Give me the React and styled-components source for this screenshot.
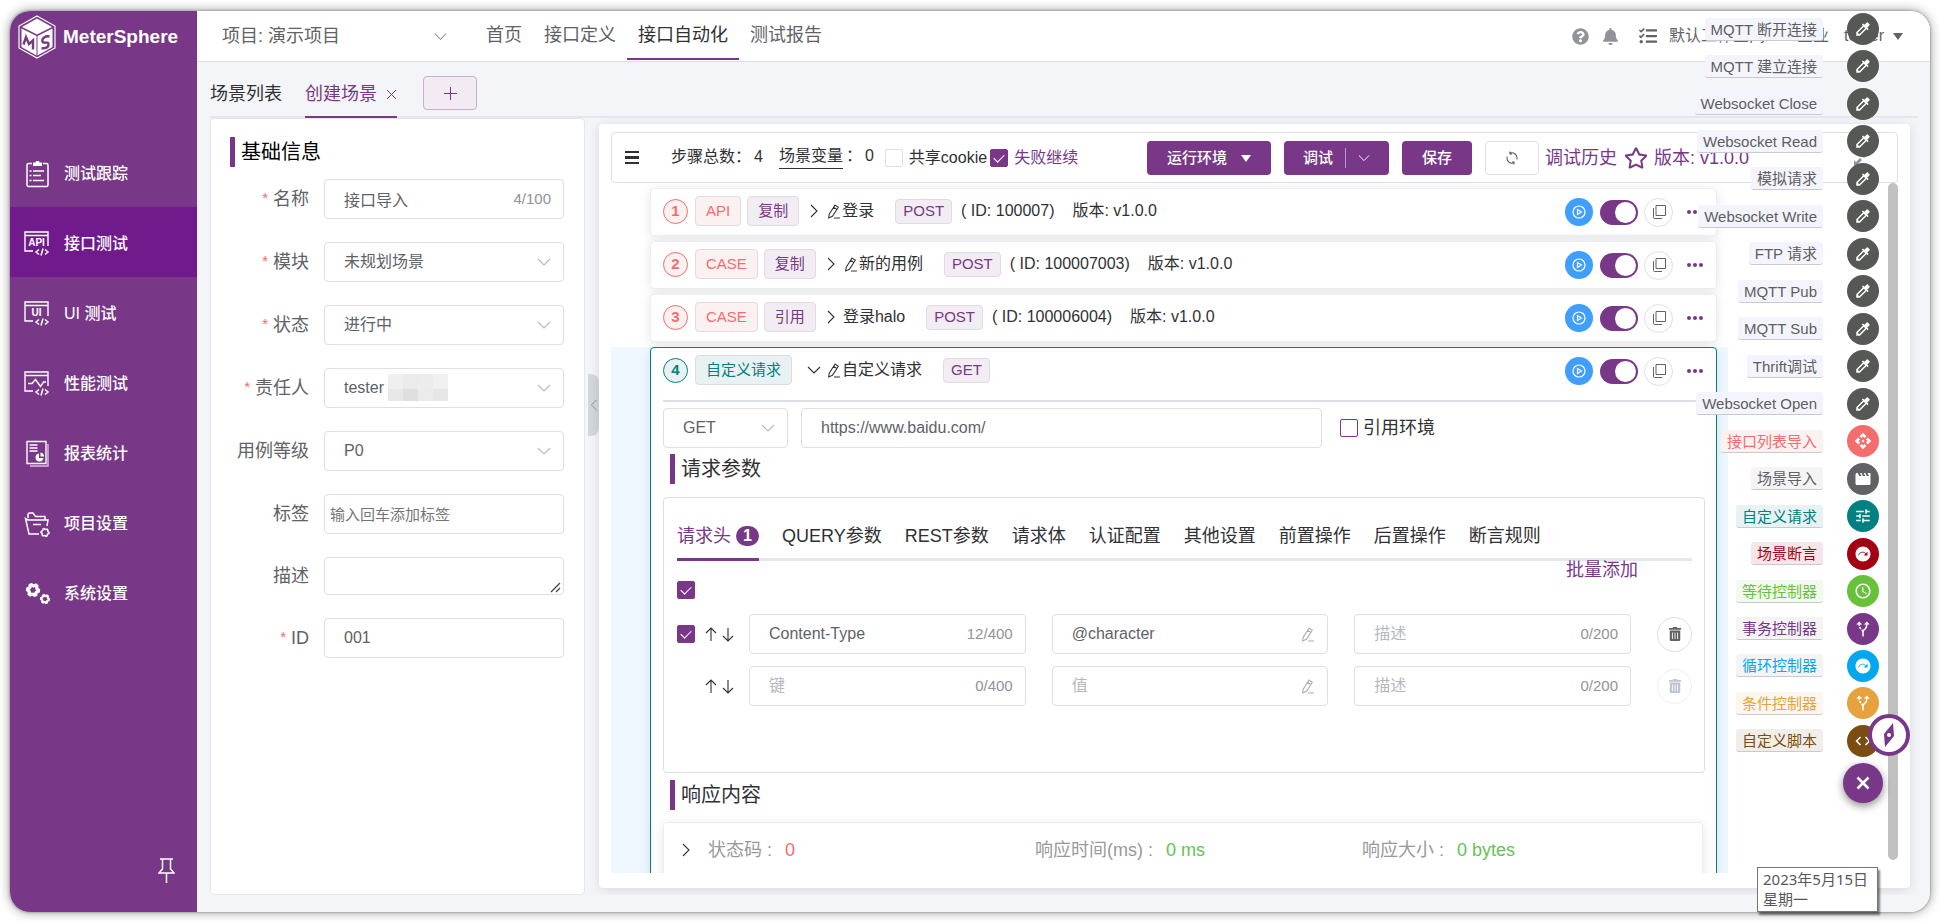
import React from 'react';
import styled, { createGlobalStyle, css } from 'styled-components';
import { FaQuestionCircle, FaBell, FaTasks, FaRegStar, FaTrashAlt } from 'react-icons/fa';
import {
  MdColorize, MdApi, MdMovie, MdTune, MdNextPlan, MdAccessTime, MdAltRoute, MdCode,
} from 'react-icons/md';

const purple = '#783887';
const teal = '#008080';
const line = '#dcdfe6';
const ink = '#303133';
const text = '#606266';

const GlobalStyle = createGlobalStyle`
  * { box-sizing: border-box; }
  body {
    margin: 0;
    background: #fff;
    color: ${ink};
    font-family: "Liberation Sans", "Noto Sans CJK SC", sans-serif;
    font-size: 16px;
    line-height: 24px;
  }
  button, input, select, textarea { font: inherit; color: inherit; margin: 0; }
  button { padding: 0; border: 0; background: none; cursor: pointer; }
  a { color: inherit; text-decoration: none; }
  h1, h2, p { margin: 0; font-weight: 400; }
  svg { display: block; flex: none; }
`;

/* ---------- page shell ---------- */

const Page = styled.div`
  position: relative;
  height: 100vh;
  min-height: 600px;
  padding: 11px 10px 10px;
  overflow: hidden;
`;

const Frame = styled.div`
  display: flex;
  height: 100%;
  border-radius: 20px;
  overflow: hidden;
  background: #f4f5f8;
`;

const FrameShadow = styled.div`
  height: 100%;
  border-radius: 20px;
  box-shadow: 0 0 3px rgba(0, 0, 0, 0.4), 0 0 12px rgba(0, 0, 0, 0.4);
`;

const Sidebar = styled.aside`
  display: flex;
  flex-direction: column;
  width: 187px;
  flex: none;
  background: ${purple};
  color: #fff;
`;

const Brand = styled.a`
  display: flex;
  align-items: center;
  gap: 7px;
  height: 51px;
  padding-left: 8px;
  font-size: 19px;
  font-weight: 700;
`;

const Menu = styled.nav`
  display: flex;
  flex-direction: column;
  margin-top: 75px;
`;

const MenuItem = styled.a`
  display: flex;
  align-items: center;
  gap: 13px;
  height: 70px;
  padding: 4px 0 0 14px;
  font-size: 16px;
  font-weight: 500;
  background: ${(p) => (p.$active ? '#701a8c' : 'transparent')};
`;

const PinButton = styled.button`
  margin: auto 22px 28px auto;
`;

const Main = styled.div`
  display: flex;
  flex-direction: column;
  flex: 1;
  min-width: 0;
`;

const Header = styled.header`
  display: flex;
  align-items: stretch;
  height: 51px;
  flex: none;
  padding: 0 27px 0 25px;
  background: #fff;
  border-bottom: 1px solid ${line};
  color: ${text};
`;

const ProjectPicker = styled.button`
  display: flex;
  align-items: center;
  justify-content: space-between;
  width: 225px;
  font-size: 18px;
`;

const TopNav = styled.nav`
  display: flex;
  margin-left: 28px;
  font-size: 18px;
`;

const TopLink = styled.a`
  display: flex;
  align-items: center;
  height: 49px;
  padding: 0 11px;
  border-bottom: 2px solid ${(p) => (p.$active ? purple : 'transparent')};
  color: ${(p) => (p.$active ? ink : text)};
`;

const HeaderTools = styled.div`
  display: flex;
  align-items: center;
  margin-left: auto;
  font-size: 16px;
`;

const ToolIcon = styled.button`
  margin-right: ${(p) => p.$gap}px;
  color: ${(p) => (p.$dark ? text : '#909399')};
`;

const ToolLink = styled.a`
  margin-right: ${(p) => p.$gap}px;
`;

/* ---------- tabs ---------- */

const TabBar = styled.div`
  display: flex;
  align-items: center;
  height: 56px;
  flex: none;
  margin: 0 12px 0 13px;
  border-bottom: 2px solid #e4e7ed;
  font-size: 18px;
`;

const PageTab = styled.button`
  display: flex;
  align-items: center;
  gap: 9px;
  align-self: stretch;
  height: 56px;
  padding-top: 10px;
  margin-right: ${(p) => p.$gap}px;
  border-bottom: 2px solid ${(p) => (p.$active ? purple : 'transparent')};
  color: ${(p) => (p.$active ? purple : ink)};
`;

const AddTab = styled.button`
  display: flex;
  align-items: center;
  justify-content: center;
  width: 54px;
  height: 34px;
  margin-top: 8px;
  border: 1px solid #c9afcf;
  border-radius: 4px;
  background: #f2ebf3;
  color: ${purple};
`;

const Workspace = styled.div`
  display: flex;
  flex: 1;
  min-height: 0;
  margin: 0 12px 17px 13px;
`;

/* ---------- basic info form ---------- */

const InfoPanel = styled.section`
  width: 375px;
  flex: none;
  padding: 18px 20px 0 19px;
  background: #fff;
  border: 1px solid #e6e6e9;
  border-radius: 4px;
`;

const SectionTitle = styled.h2`
  display: flex;
  align-items: center;
  height: 30px;
  padding-left: 6px;
  border-left: 5px solid ${purple};
  font-size: 20px;
  color: ${(p) => (p.$strong ? '#000' : ink)};
`;

const FormList = styled.form`
  display: flex;
  flex-direction: column;
  gap: 23px;
  margin-top: 12px;
`;

const FormRow = styled.div`
  display: flex;
  align-items: center;
`;

const Label = styled.label`
  width: 79px;
  margin-right: 15px;
  text-align: right;
  white-space: nowrap;
  font-size: 18px;
  color: ${text};
`;

const Required = styled.span`
  margin-right: 5px;
  vertical-align: 2px;
  line-height: 16px;
  font-size: 15px;
  color: #f56c6c;
`;

const Box = styled.div`
  position: relative;
  display: flex;
  align-items: center;
  flex: 1;
  min-width: 0;
  height: ${(p) => p.$height || 40}px;
  padding: 0 12px 0 ${(p) => (p.$tight ? 5 : 19)}px;
  background: #fff;
  border: 1px solid ${line};
  border-radius: 4px;
  color: ${text};
`;

const MethodBox = styled(Box)`
  flex: none;
  width: 125px;
`;

const UrlBox = styled(Box)`
  flex: none;
  width: 50%;
`;

const bare = css`
  flex: 1;
  min-width: 0;
  width: 100%;
  height: 100%;
  padding: 0;
  border: 0;
  outline: 0;
  background: transparent;
`;

const TextInput = styled.input`
  ${bare}
  font-size: ${(p) => (p.$small ? 15 : 16)}px;
  &::placeholder { color: ${(p) => (p.$small ? '#757575' : '#b4b8c0')}; opacity: 1; }
`;

const SelectInput = styled.select`
  ${bare}
  appearance: none;
`;

const AreaInput = styled.textarea`
  ${bare}
  resize: none;
`;

const Count = styled.span`
  font-size: 15px;
  color: #909399;
`;

const Grip = styled.span`
  align-self: flex-end;
  margin: 0 -10px 1px 0;
`;

const Mosaic = styled.span`
  position: absolute;
  left: 63px;
  top: 5px;
  display: grid;
  grid-template-columns: repeat(4, 15px);
  grid-template-rows: 15px 12px;
`;

const MosaicCell = styled.span`
  background: ${(p) => p.$tone};
`;

const Chevron = ({ size = 14, dir = 'down', color = 'currentColor', ...rest }) => {
  const d = {
    down: 'M1 4l6 6 6-6',
    right: 'M4 1l6 6-6 6',
    left: 'M10 1L4 7l6 6',
  }[dir];
  return (
    <svg width={size} height={size} viewBox="0 0 14 14" fill="none" stroke={color} strokeWidth="1.1" {...rest}>
      <path d={d} />
    </svg>
  );
};

const Caret = () => (
  <svg width="10" height="8" viewBox="0 0 10 8" fill="currentColor"><path d="M0 1h10L5 8z" /></svg>
);

const Cross = () => (
  <svg width="11" height="11" viewBox="0 0 11 11" stroke="currentColor" strokeWidth="1"><path d="M1 1l9 9M10 1l-9 9" /></svg>
);

/* ---------- splitter and scenario card ---------- */

const Splitter = styled.div`
  display: flex;
  align-items: flex-start;
  width: 14px;
  flex: none;
  padding: 256px 0 0 3px;
`;

const CollapseHandle = styled.button`
  display: flex;
  align-items: center;
  justify-content: center;
  width: 11px;
  height: 62px;
  border-radius: 0 8px 8px 0;
  background: #d3d8dd;
  color: #8d9095;
`;

const CardSlot = styled.div`
  display: flex;
  flex: 1;
  min-width: 0;
  margin-left: -11px;
  padding: 6px 8px 7px 11px;
  overflow: hidden;
  pointer-events: none;
  & > * { pointer-events: auto; }
`;

const ScenarioCard = styled.section`
  display: flex;
  flex-direction: column;
  flex: 1;
  min-width: 0;
  padding: 8px 12px 15px;
  background: #fff;
  border-radius: 4px;
  box-shadow: 0 2px 12px rgba(0, 0, 0, 0.12);
`;

const Toolbar = styled.div`
  display: flex;
  align-items: center;
  justify-content: space-between;
  height: 51px;
  flex: none;
  padding: 0 26px 0 13px;
  border: 1px solid ${line};
  border-radius: 4px;
`;

const ToolGroup = styled.div`
  display: flex;
  align-items: center;
`;

const MenuButton = styled.button`
  margin-right: 32px;
`;

const Stat = styled.span`
  display: flex;
  gap: 3px;
  margin-right: ${(p) => p.$gap}px;
  padding-bottom: 2px;
`;

const VarLink = styled.a`
  border-bottom: 1px solid ${ink};
`;

const CheckLabel = styled.label`
  display: flex;
  align-items: center;
  gap: ${(p) => (p.$large ? 5 : 6)}px;
  margin-right: 3px;
  font-size: ${(p) => (p.$large ? 18 : 16)}px;
  color: ${(p) => (p.$accent ? purple : ink)};
`;

const Check = styled.input.attrs({ type: 'checkbox' })`
  position: relative;
  appearance: none;
  width: 18px;
  height: 18px;
  flex: none;
  border: 1px solid ${(p) => (p.$outline ? purple : line)};
  border-radius: 2px;
  background: #fff;
  &:checked { background: ${purple}; border-color: ${purple}; }
  &:checked::after {
    content: "";
    position: absolute;
    left: 5px;
    top: 2px;
    width: 5px;
    height: 9px;
    border: solid #fff;
    border-width: 0 1px 1px 0;
    transform: rotate(45deg);
  }
`;

const Primary = styled.button`
  display: flex;
  align-items: center;
  height: 34px;
  padding: 0 ${(p) => p.$pad}px;
  margin-right: 13px;
  gap: ${(p) => p.$gap || 0}px;
  border-radius: 4px;
  background: ${purple};
  color: #fff;
  font-size: 15px;
  font-weight: 500;
`;

const SplitMark = styled.span`
  width: 1px;
  height: 20px;
  background: rgba(255, 255, 255, 0.5);
`;

const RefreshButton = styled.button`
  display: flex;
  align-items: center;
  justify-content: center;
  width: 54px;
  height: 34px;
  margin-right: 6px;
  border: 1px solid ${line};
  border-radius: 4px;
`;

const AccentLink = styled.a`
  font-size: 18px;
  color: ${purple};
`;

const StarButton = styled.button`
  margin: 0 6px 0 7px;
  color: ${purple};
`;

const ExpandButton = styled.button`
  margin-left: 104px;
  color: #909399;
`;

/* ---------- step list ---------- */

const Scroller = styled.div`
  display: flex;
  flex: 1;
  min-height: 0;
  overflow: hidden;
`;

const StepList = styled.ol`
  flex: 1;
  min-width: 0;
  margin: 0 160px 0 0;
  padding: 5px 0 0;
  list-style: none;
`;

const Thumb = styled.div`
  width: 10px;
  margin-bottom: 13px;
  border-radius: 5px;
  background: #c1c1c1;
`;

const StepItem = styled.li`
  padding: 0 11px 0 39px;
  margin-bottom: 5px;
  background: ${(p) => (p.$selected ? '#eff7ff' : 'transparent')};
`;

const StepCard = styled.div`
  background: #fff;
  border: 1px solid ${(p) => (p.$selected ? teal : '#ebeef5')};
  border-radius: 4px;
  box-shadow: 0 2px 12px rgba(0, 0, 0, 0.1);
`;

const StepHead = styled.div`
  display: flex;
  align-items: center;
  justify-content: space-between;
  height: 46px;
  padding: 0 13px 0 12px;
`;

const StepInfo = styled.div`
  display: flex;
  align-items: center;
  padding-bottom: 2px;
  white-space: nowrap;
`;

const tones = {
  red: { fg: '#f56c6c', bg: '#fcf1f1' },
  teal: { fg: teal, bg: '#e8f2f2' },
  purple: { fg: purple, bg: '#f2ecf3' },
};

const Index = styled.span`
  display: flex;
  align-items: center;
  justify-content: center;
  width: 25px;
  height: 25px;
  margin-right: 7px;
  border: 1px solid ${(p) => tones[p.$tone].fg};
  border-radius: 50%;
  background: ${(p) => tones[p.$tone].bg};
  color: ${(p) => tones[p.$tone].fg};
  font-size: 15px;
  font-weight: 700;
`;

const Tag = styled.span`
  display: flex;
  align-items: center;
  height: ${(p) => (p.$short ? 25 : 30)}px;
  padding: 0 ${(p) => (p.$short ? 7 : 10)}px;
  margin-right: ${(p) => (p.$short ? 9 : 6)}px;
  border: 1px solid #e4d7e7;
  border-radius: 4px;
  background: ${(p) => tones[p.$tone].bg};
  color: ${(p) => tones[p.$tone].fg};
  font-size: 15px;
`;

const Fold = styled.button`
  margin: 0 5px 0 ${(p) => (p.$open ? 9 : 2)}px;
`;

const RenameButton = styled.button`
  margin-right: 1px;
`;

const StepName = styled.span`
  margin-right: 21px;
`;

const StepMeta = styled.span`
  margin-right: 18px;
`;

const StepActions = styled.div`
  display: flex;
  align-items: center;
`;

const RunButton = styled.button`
  display: flex;
  align-items: center;
  justify-content: center;
  width: 28px;
  height: 28px;
  margin-right: 7px;
  border-radius: 50%;
  background: #409eff;
  color: #fff;
`;

const Toggle = styled.input.attrs({ type: 'checkbox', role: 'switch' })`
  position: relative;
  appearance: none;
  width: 38px;
  height: 25px;
  margin-right: 6px;
  border-radius: 13px;
  background: ${line};
  &:checked { background: ${purple}; }
  &::after {
    content: "";
    position: absolute;
    top: 2px;
    right: 2px;
    width: 21px;
    height: 21px;
    border-radius: 50%;
    background: #fff;
  }
`;

const RoundButton = styled.button`
  display: flex;
  align-items: center;
  justify-content: center;
  width: ${(p) => p.$size}px;
  height: ${(p) => p.$size}px;
  flex: none;
  border: 1px solid ${line};
  border-radius: 50%;
  color: ${text};
  &:disabled { color: #c0c4cc; border-color: #ebeef5; }
`;

const MoreButton = styled.button`
  margin-left: 14px;
  color: ${purple};
`;

/* ---------- request editor ---------- */

const Editor = styled.div`
  margin: 6px 11px 0 12px;
  border-top: 2px solid ${line};
`;

const UrlRow = styled.div`
  display: flex;
  align-items: center;
  gap: 13px;
  margin: 6px 0;
`;

const EnvSlot = styled.div`
  padding-left: 5px;
`;

const TitleSlot = styled.div`
  padding-left: 7px;
`;

const ParamBox = styled.div`
  margin: 13px 0 7px;
  padding: 16px 12px 66px 13px;
  border: 1px solid ${line};
  border-radius: 4px;
`;

const ParamTabs = styled.div`
  display: flex;
  gap: 23px;
  height: 47px;
  border-bottom: 3px solid #e4e7ed;
`;

const ParamTab = styled.button`
  display: flex;
  align-items: center;
  gap: 5px;
  height: 47px;
  border-bottom: 3px solid ${(p) => (p.$active ? purple : 'transparent')};
  color: ${(p) => (p.$active ? purple : ink)};
  font-size: 18px;
  white-space: nowrap;
`;

const Badge = styled.span`
  display: flex;
  align-items: center;
  justify-content: center;
  width: 23px;
  height: 20px;
  border-radius: 10px;
  background: ${purple};
  color: #fff;
  font-size: 16px;
  font-weight: 700;
`;

const BatchRow = styled.div`
  display: flex;
  justify-content: flex-end;
  height: 20px;
  padding-right: 54px;
  line-height: 18px;
`;

const ParamRow = styled.div`
  display: flex;
  align-items: center;
  margin-top: ${(p) => p.$top}px;
`;

const Lead = styled.div`
  display: flex;
  align-items: center;
  width: 72px;
  flex: none;
  gap: 5px;
`;

const CheckCell = styled.span`
  display: flex;
  width: 18px;
  margin-right: 5px;
`;

const Fields = styled.div`
  display: flex;
  align-items: center;
  flex: 1;
  gap: 26px;
`;

const ResponseCard = styled.div`
  display: flex;
  align-items: flex-start;
  height: 120px;
  margin: 12px 2px 0 0;
  padding: 0 13px 0 15px;
  border: 1px solid #ebeef5;
  border-radius: 4px;
  box-shadow: 0 2px 12px rgba(0, 0, 0, 0.1);
`;

const ResponseFold = styled.button`
  width: 29px;
  height: 54px;
  display: flex;
  align-items: center;
`;

const Metric = styled.div`
  display: flex;
  align-items: center;
  flex: 1;
  height: 54px;
  gap: 13px;
  font-size: 18px;
  color: #999;
`;

const MetricValue = styled.span`
  color: ${(p) => (p.$bad ? '#f56c6c' : '#61c454')};
`;

/* ---------- floating layers ---------- */

const FabStack = styled.div`
  position: absolute;
  top: 13px;
  right: 57px;
  display: flex;
  flex-direction: column;
  align-items: flex-end;
  gap: 6px;
`;

const FabList = styled.ul`
  display: flex;
  flex-direction: column;
  justify-content: space-between;
  height: 744px;
  margin: 0;
  padding: 0 4px 0 0;
  list-style: none;
`;

const FabItem = styled.li`
  display: flex;
  align-items: center;
  justify-content: flex-end;
  gap: 24px;
`;

const FabLabel = styled.span`
  height: 23px;
  padding: 0 6px;
  line-height: 23px;
  border-radius: 3px;
  border-bottom: 1px solid #c9c9cf;
  background: ${(p) => p.$bg};
  color: ${(p) => p.$fg};
  font-size: 15px;
`;

const FabButton = styled.button`
  display: flex;
  align-items: center;
  justify-content: center;
  width: 32px;
  height: 32px;
  border-radius: 50%;
  background: ${(p) => p.$bg};
  color: #fff;
`;

const FabClose = styled(FabButton)`
  width: 40px;
  height: 40px;
  box-shadow: 0 3px 8px rgba(0, 0, 0, 0.45);
`;

const CompassButton = styled.button`
  position: absolute;
  top: 714px;
  right: 30px;
  display: flex;
  align-items: center;
  justify-content: center;
  width: 42px;
  height: 42px;
  border: 4px solid ${purple};
  border-radius: 50%;
  background: #fff;
`;

const DateTip = styled.div`
  position: absolute;
  right: 62px;
  bottom: 10px;
  width: 121px;
  height: 45px;
  padding: 1px 5px;
  line-height: 20px;
  border: 1px solid #767676;
  background: #fff;
  box-shadow: 2px 3px 2px rgba(0, 0, 0, 0.5);
  color: #575757;
  font-family: "Noto Sans", "Noto Sans CJK SC", sans-serif;
  font-size: 15px;
`;

/* ---------- drawings ---------- */

const Logo = () => (
  <svg width="38" height="44" viewBox="0 0 38 44">
    <path d="M19 1l18 10v22L19 43 1 33V11z" fill="none" stroke="#fff" strokeWidth="1.2" />
    <path d="M19 3.500l15 8.500-15 7.500L4 12z" fill="#fff" />
    <path d="M3.500 13.500L18.500 21v19.500L3.500 32z" fill="#fff" />
    <path d="M34.500 13.500L19.500 21v19.500l15-8.500z" fill="#fff" />
    <path d="M5.500 29.500l2.500-7.500 3 7 4-3.500 0 9" fill="none" stroke={purple} strokeWidth="2.400" />
    <path d="M31.500 21.500c-4-1-8 2-7 5s6-1 6 3-4 4-7 4" fill="none" stroke={purple} strokeWidth="2.400" />
  </svg>
);

const CodeMark = () => (
  <path d="M15 19.500l-3 2.500 3 2.500M21 19.500l3 2.500-3 2.500M19 18.500l-2 7" strokeWidth="1.500" />
);

const WindowBase = ({ children, label }) => (
  <svg width="27" height="28" viewBox="0 0 27 28" fill="none" stroke="#fff" strokeWidth="1.400">
    <path d="M24 16V2H1v19h8M1 5.500h23" />
    <CodeMark />
    {label && (
      <text x="12.500" y="16" textAnchor="middle" fontSize="10" fontWeight="700" fill="#fff" stroke="none">{label}</text>
    )}
    {children}
  </svg>
);

const gearPath = (cx, cy, r) => {
  const pts = [];
  for (let i = 0; i < 24; i += 1) {
    const a = (i / 24) * Math.PI * 2;
    const k = i % 4 < 2 ? r : r * 0.78;
    pts.push(`${(cx + Math.cos(a) * k).toFixed(1)} ${(cy + Math.sin(a) * k).toFixed(1)}`);
  }
  return `M${pts.join('L')}z`;
};

const menuIcons = {
  track: (
    <svg width="27" height="28" viewBox="0 0 27 28" fill="none" stroke="#fff" strokeWidth="1.500">
      <path d="M8 3.500H4.500a1.500 1.500 0 0 0-1.500 1.500v20a1.500 1.500 0 0 0 1.500 1.500h18a1.500 1.500 0 0 0 1.500-1.500V5a1.500 1.500 0 0 0-1.500-1.500H19" />
      <path d="M9 6V2.500h2.500L12 1h3l.5 1.500H18V6z" fill="#fff" stroke="none" />
      <path d="M5.500 11h2M9 11h11M5.500 15.500h2M9 15.500h8M5.500 20.500h2M9 20.500h11" />
    </svg>
  ),
  api: <WindowBase label="API" />,
  ui: <WindowBase label="UI" />,
  perf: <WindowBase><path d="M4 13.500h4l3.500-4 5 7 3-4.500h2.500" /></WindowBase>,
  report: (
    <svg width="27" height="28" viewBox="0 0 27 28" fill="none" stroke="#fff" strokeWidth="1.400">
      <path d="M3 1.500h19v22H3z" />
      <path d="M24 4v22H6" strokeOpacity="0.7" />
      <path d="M5.500 5h8M5.500 8h8M5.500 11h8" />
      <path d="M15 13.500a4 4 0 1 0 4.500 4.500H15z" fill="#fff" stroke="none" />
      <path d="M16.500 12.500v4H20a4 4 0 0 0-3.500-4z" fill="#fff" stroke="none" />
    </svg>
  ),
  project: (
    <svg width="27" height="28" viewBox="0 0 27 28" fill="none" stroke="#fff" strokeWidth="1.500">
      <path d="M4 8V4.500A1.500 1.500 0 0 1 5.500 3H9l2.500 3.500H21V10" />
      <path d="M15 24H5L1.500 8.500 4 10h20l-1 6M9 14.500h8" />
      <path d={gearPath(21, 22.500, 4)} />
    </svg>
  ),
  system: (
    <svg width="27" height="28" viewBox="0 0 27 28" fill="none" stroke="#fff">
      <path d={gearPath(9, 10, 5.500)} strokeWidth="3.200" />
      <path d={gearPath(21, 19, 4)} strokeWidth="2.200" />
    </svg>
  ),
};

const PinIcon = () => (
  <svg width="17" height="26" viewBox="0 0 17 26" fill="none" stroke="#fff" strokeWidth="1.500">
    <path d="M2 1h13M4.500 1v10L1 15h15l-3.500-4V1M8.500 15v10" />
  </svg>
);

const EditIcon = ({ color = ink }) => (
  <svg width="15" height="15" viewBox="0 0 14 14" fill="none" stroke={color} strokeWidth="1">
    <path d="M8.500 1l3 2-5.500 8.500-3.500 1.500.5-3.500zM7 3l3 2M7.500 13H13" />
  </svg>
);

const PlayIcon = () => (
  <svg width="14" height="14" viewBox="0 0 14 14" fill="none" stroke="currentColor" strokeWidth="1.200">
    <circle cx="7" cy="7" r="6" /><path d="M5.500 4.500v5L9.500 7z" />
  </svg>
);

const CopyIcon = () => (
  <svg width="14" height="14" viewBox="0 0 14 14" fill="none" stroke="currentColor" strokeWidth="1">
    <path d="M4 .5h9.500v10H4zM1.500 3v9.500a1 1 0 0 0 1 1H10" />
  </svg>
);

const DotsIcon = () => (
  <svg width="16" height="6" viewBox="0 0 16 6" fill="currentColor">
    <circle cx="2" cy="3" r="2" /><circle cx="8" cy="3" r="2" /><circle cx="14" cy="3" r="2" />
  </svg>
);

const RefreshIcon = () => (
  <svg width="14" height="14" viewBox="0 0 14 14" fill="none" stroke={text} strokeWidth="1.100">
    <path d="M4.500 2.500A5 5 0 0 1 12 7v1.500M9.500 11.500A5 5 0 0 1 2 7V5.500M5 .5v2.500h2M9 13.500V11H7" />
  </svg>
);

const ArrowIcon = ({ down }) => (
  <svg width="12" height="15" viewBox="0 0 12 15" fill="none" stroke={ink} strokeWidth="1.100">
    {down ? <path d="M6 1v13M1 9l5 5 5-5" /> : <path d="M6 14V1M1 6l5-5 5 5" />}
  </svg>
);

const ExpandIcon = () => (
  <svg width="18" height="18" viewBox="0 0 18 18" fill="currentColor">
    <path d="M11 1h6v6l-2-2-4 4-2-2 4-4zM7 17H1v-6l2 2 4-4 2 2-4 4z" />
  </svg>
);

const CloseIcon = () => (
  <svg width="14" height="14" viewBox="0 0 14 14" stroke="currentColor" strokeWidth="2.600">
    <path d="M1.500 1.500l11 11M12.500 1.500l-11 11" />
  </svg>
);

const CompassNeedle = () => (
  <svg width="34" height="34" viewBox="0 0 34 34">
    <path d="M21 5l1 13-9 11-1-13z" fill={purple} /><circle cx="17" cy="17" r="2" fill="#fff" />
  </svg>
);

/* ---------- data ---------- */

const menu = [
  ['track', '测试跟踪'], ['api', '接口测试'], ['ui', 'UI 测试'], ['perf', '性能测试'],
  ['report', '报表统计'], ['project', '项目设置'], ['system', '系统设置'],
];

const steps = [
  { n: 1, tone: 'red', kind: 'API', mode: '复制', edit: true, name: '登录', method: 'POST', id: '100007' },
  { n: 2, tone: 'red', kind: 'CASE', mode: '复制', edit: true, name: '新的用例', method: 'POST', id: '100007003' },
  { n: 3, tone: 'red', kind: 'CASE', mode: '引用', name: '登录halo', method: 'POST', id: '100006004' },
  { n: 4, tone: 'teal', kind: '自定义请求', edit: true, name: '自定义请求', method: 'GET', open: true },
];

const paramTabs = ['QUERY参数', 'REST参数', '请求体', '认证配置', '其他设置', '前置操作', '后置操作', '断言规则'];

const plugin = { bg: '#555855', fg: '#5c5f5c', label: '#f4f4ff', Icon: MdColorize };
const fabs = [
  ...['MQTT 断开连接', 'MQTT 建立连接', 'Websocket Close', 'Websocket Read', '模拟请求', 'Websocket Write',
    'FTP 请求', 'MQTT Pub', 'MQTT Sub', 'Thrift调试', 'Websocket Open'].map((name) => ({ ...plugin, name })),
  { name: '接口列表导入', bg: '#f56c6c', fg: '#f56c6c', label: '#fcf1f1', Icon: MdApi },
  { name: '场景导入', bg: '#606266', fg: '#606266', label: '#f4f4f5', Icon: MdMovie },
  { name: '自定义请求', bg: teal, fg: teal, label: '#e8f2f2', Icon: MdTune },
  { name: '场景断言', bg: '#a30014', fg: '#a30014', label: '#f7e6e9', Icon: MdNextPlan },
  { name: '等待控制器', bg: '#67c23a', fg: '#67c23a', label: '#f2f9ee', Icon: MdAccessTime },
  { name: '事务控制器', bg: '#783887', fg: '#783887', label: '#f4f4f5', Icon: MdAltRoute },
  { name: '循环控制器', bg: '#02a7f0', fg: '#02a7f0', label: '#f4f4f5', Icon: MdNextPlan },
  { name: '条件控制器', bg: '#e6a23c', fg: '#e6a23c', label: '#fcf6ee', Icon: MdAltRoute },
  { name: '自定义脚本', bg: '#7b4d12', fg: '#7b4d12', label: '#f1eee9', Icon: MdCode },
];

/* ---------- composed parts ---------- */

const Field = ({ id, label, required, children }) => (
  <FormRow>
    <Label htmlFor={id}>{required && <Required>*</Required>}{label}</Label>
    {children}
  </FormRow>
);

const SelectBox = ({ id, value, children }) => (
  <Box>
    <SelectInput id={id} defaultValue={value}><option>{value}</option></SelectInput>
    <Chevron color="#b4b8c0" />
    {children}
  </Box>
);

const tonesOfMosaic = ['#efefef', '#ebebeb', '#ececec', '#f0f0f0', '#e8e8e8', '#dfdfdf', '#ebebeb', '#e6e6e6'];

const BasicInfo = () => (
  <InfoPanel>
    <SectionTitle $strong>基础信息</SectionTitle>
    <FormList>
      <Field id="name" label="名称" required>
        <Box><TextInput id="name" defaultValue="接口导入" /><Count>4/100</Count></Box>
      </Field>
      <Field id="module" label="模块" required><SelectBox id="module" value="未规划场景" /></Field>
      <Field id="status" label="状态" required><SelectBox id="status" value="进行中" /></Field>
      <Field id="owner" label="责任人" required>
        <SelectBox id="owner" value="tester">
          <Mosaic>{tonesOfMosaic.map((t, i) => <MosaicCell key={i} $tone={t} />)}</Mosaic>
        </SelectBox>
      </Field>
      <Field id="level" label="用例等级"><SelectBox id="level" value="P0" /></Field>
      <Field id="tags" label="标签">
        <Box $tight><TextInput id="tags" $small placeholder="输入回车添加标签" /></Box>
      </Field>
      <Field id="desc" label="描述">
        <Box $height={38}>
          <AreaInput id="desc" rows={1} />
          <Grip>
            <svg width="11" height="11" viewBox="0 0 11 11" stroke="#444" strokeWidth="1.300"><path d="M1 10l9-9M6 10l4-4" /></svg>
          </Grip>
        </Box>
      </Field>
      <Field id="sid" label="ID" required><Box><TextInput id="sid" defaultValue="001" /></Box></Field>
    </FormList>
  </InfoPanel>
);

const StepHeader = ({ step }) => (
  <StepHead>
    <StepInfo>
      <Index $tone={step.tone}>{step.n}</Index>
      <Tag $tone={step.tone}>{step.kind}</Tag>
      {step.mode && <Tag $tone="purple">{step.mode}</Tag>}
      <Fold $open={step.open} aria-label="展开"><Chevron dir={step.open ? 'down' : 'right'} color={ink} /></Fold>
      {step.edit && <RenameButton aria-label="重命名"><EditIcon /></RenameButton>}
      <StepName>{step.name}</StepName>
      <Tag $short $tone="purple">{step.method}</Tag>
      {step.id && <StepMeta>( ID: {step.id})</StepMeta>}
      {step.id && <StepMeta>版本: v1.0.0</StepMeta>}
    </StepInfo>
    <StepActions>
      <RunButton aria-label="运行"><PlayIcon /></RunButton>
      <Toggle defaultChecked aria-label="启用" />
      <RoundButton $size={29} aria-label="复制"><CopyIcon /></RoundButton>
      <MoreButton aria-label="更多"><DotsIcon /></MoreButton>
    </StepActions>
  </StepHead>
);

const HeaderParam = ({ checked, top, name, value, count }) => (
  <ParamRow $top={top}>
    <Lead>
      <CheckCell>{checked && <Check defaultChecked aria-label="启用参数" />}</CheckCell>
      <button aria-label="上移"><ArrowIcon /></button>
      <button aria-label="下移"><ArrowIcon down /></button>
    </Lead>
    <Fields>
      <Box><TextInput aria-label="键" placeholder="键" defaultValue={name} /><Count>{count}</Count></Box>
      <Box><TextInput aria-label="值" placeholder="值" defaultValue={value} /><EditIcon color="#a8abb2" /></Box>
      <Box><TextInput aria-label="描述" placeholder="描述" /><Count>0/200</Count></Box>
      <RoundButton $size={35} disabled={!checked} aria-label="删除"><FaTrashAlt size={14} /></RoundButton>
    </Fields>
  </ParamRow>
);

const RequestEditor = () => (
  <Editor>
    <UrlRow>
      <MethodBox>
        <SelectInput aria-label="请求方法" defaultValue="GET"><option>GET</option></SelectInput>
        <Chevron color="#b4b8c0" />
      </MethodBox>
      <UrlBox><TextInput aria-label="URL" defaultValue="https://www.baidu.com/" /></UrlBox>
      <EnvSlot><CheckLabel $large><Check $outline />引用环境</CheckLabel></EnvSlot>
    </UrlRow>
    <TitleSlot><SectionTitle>请求参数</SectionTitle></TitleSlot>
    <ParamBox>
      <ParamTabs>
        <ParamTab $active>请求头<Badge>1</Badge></ParamTab>
        {paramTabs.map((t) => <ParamTab key={t}>{t}</ParamTab>)}
      </ParamTabs>
      <BatchRow><AccentLink href="#batch">批量添加</AccentLink></BatchRow>
      <ParamRow $top={0}><Check defaultChecked aria-label="全选" /></ParamRow>
      <HeaderParam checked top={15} name="Content-Type" value="@character" count="12/400" />
      <HeaderParam top={12} count="0/400" />
    </ParamBox>
    <TitleSlot><SectionTitle>响应内容</SectionTitle></TitleSlot>
    <ResponseCard>
      <ResponseFold aria-label="展开响应"><Chevron dir="right" color={ink} /></ResponseFold>
      <Metric>状态码 : <MetricValue $bad>0</MetricValue></Metric>
      <Metric>响应时间(ms) : <MetricValue>0 ms</MetricValue></Metric>
      <Metric>响应大小 : <MetricValue>0 bytes</MetricValue></Metric>
    </ResponseCard>
  </Editor>
);

export default function App() {
  return (
    <>
      <GlobalStyle />
      <Page>
        <FrameShadow>
          <Frame>
            <Sidebar>
              <Brand href="#home"><Logo />MeterSphere</Brand>
              <Menu>
                {menu.map(([key, label]) => (
                  <MenuItem key={key} href={`#${key}`} $active={key === 'api'}>{menuIcons[key]}{label}</MenuItem>
                ))}
              </Menu>
              <PinButton aria-label="固定菜单"><PinIcon /></PinButton>
            </Sidebar>
            <Main>
              <Header>
                <ProjectPicker>项目: 演示项目<Chevron color="#909399" size={13} /></ProjectPicker>
                <TopNav>
                  <TopLink href="#index">首页</TopLink>
                  <TopLink href="#definition">接口定义</TopLink>
                  <TopLink href="#automation" $active>接口自动化</TopLink>
                  <TopLink href="#report">测试报告</TopLink>
                </TopNav>
                <HeaderTools>
                  <ToolIcon $gap={13} aria-label="帮助"><FaQuestionCircle size={17} /></ToolIcon>
                  <ToolIcon $gap={20} aria-label="通知"><FaBell size={17} /></ToolIcon>
                  <ToolIcon $gap={12} $dark aria-label="任务"><FaTasks size={18} /></ToolIcon>
                  <ToolLink $gap={32} href="#workspace">默认工作空间</ToolLink>
                  <ToolLink $gap={15} href="#org">企业</ToolLink>
                  <ToolLink $gap={9} href="#user">tester</ToolLink>
                  <Caret />
                </HeaderTools>
              </Header>
              <TabBar>
                <PageTab $gap={23}>场景列表</PageTab>
                <PageTab $active $gap={26}>创建场景<Cross /></PageTab>
                <AddTab aria-label="新建标签">
                  <svg width="15" height="15" viewBox="0 0 15 15" stroke="currentColor"><path d="M7.500 1v13M1 7.500h13" /></svg>
                </AddTab>
              </TabBar>
              <Workspace>
                <BasicInfo />
                <Splitter><CollapseHandle aria-label="收起"><Chevron dir="left" size={12} /></CollapseHandle></Splitter>
                <CardSlot>
                  <ScenarioCard>
                    <Toolbar>
                      <ToolGroup>
                        <MenuButton aria-label="菜单">
                          <svg width="14" height="14" viewBox="0 0 14 14" fill={ink}><path d="M0 0h14v2H0zM0 5h14v3H0zM0 11h14v2H0z" /></svg>
                        </MenuButton>
                        <Stat $gap={16}>步骤总数：<span>4</span></Stat>
                        <Stat $gap={11}><VarLink href="#vars">场景变量</VarLink>：<span>0</span></Stat>
                        <CheckLabel><Check />共享cookie</CheckLabel>
                        <CheckLabel $accent><Check defaultChecked />失败继续</CheckLabel>
                      </ToolGroup>
                      <ToolGroup>
                        <Primary $pad={20} $gap={14}>运行环境<Caret /></Primary>
                        <Primary $pad={19} $gap={12}>调试<SplitMark /><Chevron size={12} /></Primary>
                        <Primary $pad={20}>保存</Primary>
                        <RefreshButton aria-label="刷新"><RefreshIcon /></RefreshButton>
                        <AccentLink href="#history">调试历史</AccentLink>
                        <StarButton aria-label="收藏"><FaRegStar size={24} /></StarButton>
                        <AccentLink href="#version">版本: v1.0.0</AccentLink>
                        <ExpandButton aria-label="全屏"><ExpandIcon /></ExpandButton>
                      </ToolGroup>
                    </Toolbar>
                    <Scroller>
                      <StepList>
                        {steps.map((step) => (
                          <StepItem key={step.n} $selected={step.open}>
                            <StepCard $selected={step.open}>
                              <StepHeader step={step} />
                              {step.open && <RequestEditor />}
                            </StepCard>
                          </StepItem>
                        ))}
                      </StepList>
                      <Thumb />
                    </Scroller>
                  </ScenarioCard>
                </CardSlot>
              </Workspace>
            </Main>
          </Frame>
        </FrameShadow>
        <FabStack>
          <FabList>
            {fabs.map(({ name, bg, fg, label, Icon }) => (
              <FabItem key={name}>
                <FabLabel $bg={label} $fg={fg}>{name}</FabLabel>
                <FabButton $bg={bg} aria-label={name}><Icon size={18} /></FabButton>
              </FabItem>
            ))}
          </FabList>
          <FabClose $bg={purple} aria-label="关闭"><CloseIcon /></FabClose>
        </FabStack>
        <CompassButton aria-label="导航"><CompassNeedle /></CompassButton>
        <DateTip>2023年5月15日<br />星期一</DateTip>
      </Page>
    </>
  );
}
